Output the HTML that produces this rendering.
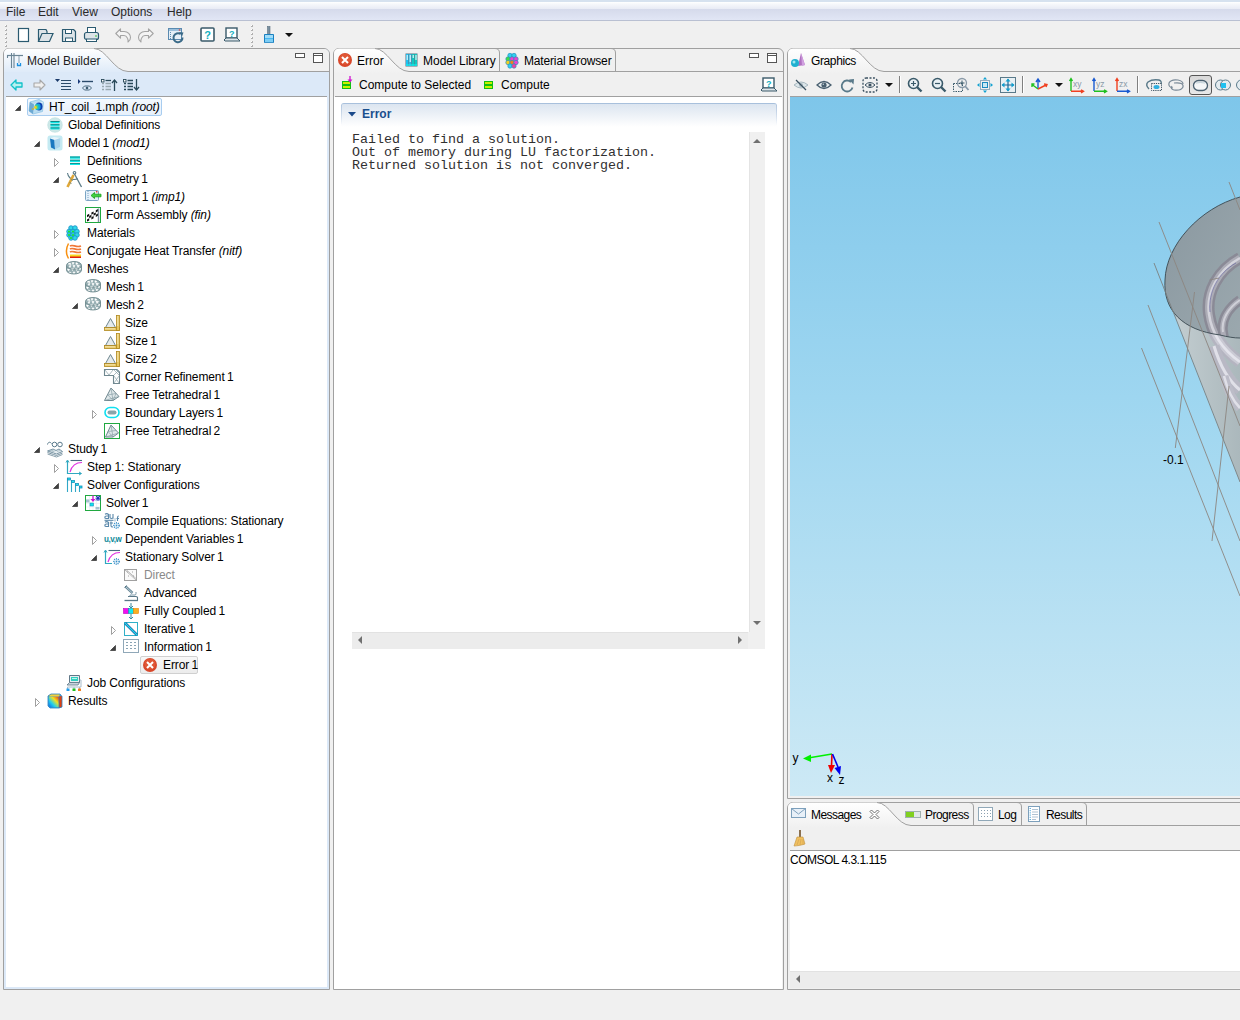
<!DOCTYPE html><html><head><meta charset="utf-8"><style>
*{margin:0;padding:0;box-sizing:border-box}
html,body{width:1240px;height:1020px;overflow:hidden;background:#f0f0f0;font-family:"Liberation Sans",sans-serif;font-size:12px;color:#000}
.a{position:absolute}
.t{position:absolute;white-space:nowrap;line-height:18px;height:18px}
svg{position:absolute;overflow:visible}
i{font-style:italic}
.mono{position:absolute;font-family:"Liberation Mono",monospace;font-size:13.33px;line-height:13px;white-space:pre;color:#303030}
</style></head><body>
<div class="a" style="left:0;top:0;width:1240px;height:21px;background:linear-gradient(#d6e2ef 0,#d6e2ef 2px,#fff 2px,#f6f8fb 4px,#e8ebf5 9px,#d5daeb 9px,#e1e6f5 20px,#b9c0d2 20px,#b9c0d2 21px)"></div>
<div class="t" style="left:6px;top:3px;color:#2a2a2a">File</div>
<div class="t" style="left:38px;top:3px;color:#2a2a2a">Edit</div>
<div class="t" style="left:72px;top:3px;color:#2a2a2a">View</div>
<div class="t" style="left:111px;top:3px;color:#2a2a2a">Options</div>
<div class="t" style="left:167px;top:3px;color:#2a2a2a">Help</div>
<div class="a" style="left:5px;top:25px;width:2px;height:2px;background:linear-gradient(135deg,#fff 0,#fff 40%,#b0b0b0 40%)"></div><div class="a" style="left:5px;top:29px;width:2px;height:2px;background:linear-gradient(135deg,#fff 0,#fff 40%,#b0b0b0 40%)"></div><div class="a" style="left:5px;top:33px;width:2px;height:2px;background:linear-gradient(135deg,#fff 0,#fff 40%,#b0b0b0 40%)"></div><div class="a" style="left:5px;top:37px;width:2px;height:2px;background:linear-gradient(135deg,#fff 0,#fff 40%,#b0b0b0 40%)"></div><div class="a" style="left:5px;top:41px;width:2px;height:2px;background:linear-gradient(135deg,#fff 0,#fff 40%,#b0b0b0 40%)"></div><div class="a" style="left:5px;top:45px;width:2px;height:2px;background:linear-gradient(135deg,#fff 0,#fff 40%,#b0b0b0 40%)"></div>
<div class="a" style="left:251px;top:25px;width:2px;height:2px;background:linear-gradient(135deg,#fff 0,#fff 40%,#b0b0b0 40%)"></div><div class="a" style="left:251px;top:29px;width:2px;height:2px;background:linear-gradient(135deg,#fff 0,#fff 40%,#b0b0b0 40%)"></div><div class="a" style="left:251px;top:33px;width:2px;height:2px;background:linear-gradient(135deg,#fff 0,#fff 40%,#b0b0b0 40%)"></div><div class="a" style="left:251px;top:37px;width:2px;height:2px;background:linear-gradient(135deg,#fff 0,#fff 40%,#b0b0b0 40%)"></div><div class="a" style="left:251px;top:41px;width:2px;height:2px;background:linear-gradient(135deg,#fff 0,#fff 40%,#b0b0b0 40%)"></div><div class="a" style="left:251px;top:45px;width:2px;height:2px;background:linear-gradient(135deg,#fff 0,#fff 40%,#b0b0b0 40%)"></div>
<svg style="left:17px;top:27px" width="14" height="16" viewBox="0 0 14 16"><rect x="1.5" y="1.5" width="10" height="13" fill="#fff" stroke="#2a5a70" stroke-width="1.2"/></svg><svg style="left:37px;top:27px" width="18" height="16" viewBox="0 0 18 16"><path d="M1.5 14.5 L1.5 2.5 L9 2.5 L10 4.5 L10 6.5" fill="#dde4e8" stroke="#2a5a70" stroke-width="1.2"/><path d="M1.5 14.5 L5 6.5 L16 6.5 L12.5 14.5 Z" fill="#dde4e8" stroke="#2a5a70" stroke-width="1.2"/></svg><svg style="left:61px;top:27px" width="16" height="16" viewBox="0 0 16 16"><path d="M1.5 2.5 L12.5 2.5 L14.5 4.5 L14.5 14.5 L1.5 14.5 Z" fill="#dde4e8" stroke="#2a5a70" stroke-width="1.2" stroke-linejoin="round"/><rect x="4.5" y="2.5" width="6" height="4" fill="#fff" stroke="#2a5a70"/><rect x="4.5" y="11" width="7" height="3.5" fill="#fff" stroke="#2a5a70"/></svg><svg style="left:83px;top:26px" width="17" height="17" viewBox="0 0 17 17"><rect x="4.5" y="1.5" width="8" height="5" fill="#fff" stroke="#2a5a70"/><rect x="1.5" y="6.5" width="14" height="7" rx="2" fill="#dde4e8" stroke="#2a5a70" stroke-width="1.2"/><rect x="3.5" y="13" width="10" height="2.5" fill="#fff" stroke="#2a5a70"/><circle cx="13" cy="10" r="0.8" fill="#20c020"/></svg><svg style="left:115px;top:28px" width="16" height="15" viewBox="0 0 16 15"><path d="M0.8 5.5 L5.5 0.8 L5.5 3.5 L9 3.5 C13 3.5 15.5 6.5 15.5 9.5 C15.5 11.5 14.5 13 13 14 C13.3 12.5 13.2 11.5 12.5 10.2 C11.8 8.8 10.5 7.5 9 7.5 L5.5 7.5 L5.5 10.2 Z" fill="#f4f4f4" stroke="#a4a4a4" stroke-width="1.1" stroke-linejoin="round"/></svg><svg style="left:138px;top:28px" width="16" height="15" viewBox="0 0 16 15"><g transform="translate(16,0) scale(-1,1)"><path d="M0.8 5.5 L5.5 0.8 L5.5 3.5 L9 3.5 C13 3.5 15.5 6.5 15.5 9.5 C15.5 11.5 14.5 13 13 14 C13.3 12.5 13.2 11.5 12.5 10.2 C11.8 8.8 10.5 7.5 9 7.5 L5.5 7.5 L5.5 10.2 Z" fill="#f4f4f4" stroke="#a4a4a4" stroke-width="1.1" stroke-linejoin="round"/></g></svg><svg style="left:168px;top:28px" width="17" height="15" viewBox="0 0 17 15"><rect x="0.5" y="0.5" width="13" height="11" fill="#e4eef6" stroke="#5a8ab0"/><rect x="1" y="1" width="12" height="2" fill="#9ac0dc"/><circle cx="11.5" cy="2" r="0.8" fill="#e04040"/><line x1="2.5" y1="4" x2="2.5" y2="11" stroke="#5a8ab0" stroke-dasharray="1,1"/><path d="M14.5 9.5 A4.5 4.5 0 1 1 12.5 6" fill="none" stroke="#3a6a88" stroke-width="2"/><path d="M11 4 L15.5 4.5 L14 8.5 Z" fill="#3a6a88"/></svg><svg style="left:200px;top:27px" width="15" height="15" viewBox="0 0 15 15"><rect x="1" y="1" width="13" height="13" rx="1" fill="#fff" stroke="#3a5a6a" stroke-width="1.6"/><text x="4.2" y="11.5" font-size="11" font-weight="bold" fill="#10b0c0" font-family="Liberation Sans">?</text></svg><svg style="left:224px;top:27px" width="16" height="15" viewBox="0 0 16 15"><rect x="2" y="1" width="11" height="10" fill="#fff" stroke="#3a5a6a" stroke-width="1.4"/><path d="M0 13 L2 11 L13 11 L16 14 L1 14 Z" fill="#dde4e8" stroke="#3a5a6a"/><text x="5" y="9.5" font-size="9" font-weight="bold" fill="#10b0c0" font-family="Liberation Sans">?</text></svg><svg style="left:263px;top:26px" width="12" height="17" viewBox="0 0 12 17"><rect x="4.5" y="0.5" width="2.5" height="8" fill="#7a90a0" stroke="#5a7080" stroke-width="0.6"/><path d="M1.5 8.5 L10.5 8.5 L10.5 16.5 L1.5 16.5 Z" fill="#48b8f0" stroke="#1a80c0"/><rect x="2" y="9" width="8" height="3" fill="#a0dcf8"/><path d="M3 13v3.5M5 13v3.5M7 13v3.5M9 13v3.5" stroke="#e0f4ff" stroke-width="0.7"/></svg><svg style="left:285px;top:33px" width="8" height="4" viewBox="0 0 8 4"><path d="M0 0 L8 0 L4 4 Z" fill="#111"/></svg>
<div class="a" style="left:3px;top:48px;width:327px;height:942px;border:1px solid #a0a0a0;border-radius:6px 6px 0 0;background:#dce9f8"></div>
<div class="a" style="left:4px;top:49px;width:325px;height:22px;background:#f0f0f0;border-radius:5px 5px 0 0"></div>
<svg style="left:0;top:44px" width="340" height="32"><defs><linearGradient id="gmb" x1="0" y1="0" x2="0" y2="1"><stop offset="0" stop-color="#ffffff"/><stop offset="1" stop-color="#dce9f8"/></linearGradient></defs><path d="M4 28 L4 10 Q4 5 9 4.5 L94 4.5 C106 4.5 114 27.5 128 27.5 L329 27.5 L329 30 L4 30 Z" fill="url(#gmb)"/><path d="M94 4.5 C106 4.5 114 27.5 128 27.5 L329 27.5" fill="none" stroke="#a0a0a0" stroke-width="1"/></svg>
<div class="a" style="left:4px;top:72px;width:325px;height:24px;background:#dce9f8"></div>
<div class="a" style="left:6px;top:96px;width:321px;height:1px;background:#a0a0a0"></div>
<div class="a" style="left:6px;top:97px;width:321px;height:890px;background:#fff"></div>
<div class="a" style="left:295px;top:53px;width:10px;height:5px;border:1px solid #555;background:#fff"></div>
<div class="a" style="left:313px;top:53px;width:10px;height:10px;border:1px solid #555;background:linear-gradient(#fff 0,#fff 1px,#555 1px,#555 2px,#fff 2px)"></div>
<svg style="left:7px;top:52px" width="16" height="16" viewBox="0 0 16 16"><path d="M4.5 1 L4.5 16 M7 1 L7 16" stroke="#6a8494" stroke-width="1.1"/><path d="M0 3.5 L16 3.5" stroke="#6a8494" stroke-width="1.2"/><path d="M0.5 3 L0.5 6" stroke="#6a8494" stroke-width="1.1"/><line x1="12" y1="4" x2="12" y2="11" stroke="#8aa0b0"/><path d="M10.5 11 L10.5 13.5 L13.5 13.5 L13.5 11" stroke="#1a90e0" stroke-width="1.3" fill="none"/></svg>
<div class="t" style="left:27px;top:52px;color:#1e1e1e">Model Builder</div>
<svg style="left:10px;top:79px" width="13" height="12" viewBox="0 0 13 12"><path d="M1 6 L6 1 L6 4 L12 4 L12 8 L6 8 L6 11 Z" fill="#b8f0f0" stroke="#10c0c8" stroke-width="1.3" stroke-linejoin="round"/></svg>
<svg style="left:33px;top:79px" width="13" height="12" viewBox="0 0 13 12"><path d="M12 6 L7 1 L7 4 L1 4 L1 8 L7 8 L7 11 Z" fill="#f0f0f0" stroke="#a8a8a8" stroke-width="1.1" stroke-linejoin="round"/></svg>
<svg style="left:55px;top:79px" width="16" height="12" viewBox="0 0 16 12"><path d="M0 0 L5 0 L2.5 3 Z" fill="#1a3a6a"/><path d="M6 1.5 L16 1.5 M6 4.5 L16 4.5 M6 7.5 L16 7.5 M6 10.5 L16 10.5" stroke="#2a4a6a" stroke-width="1.2"/></svg>
<svg style="left:78px;top:79px" width="16" height="12" viewBox="0 0 16 12"><path d="M0 0 L0 5 L2.5 2.5 Z" fill="#1a3a7a"/><path d="M4 2.5 L15 2.5" stroke="#2a4a6a" stroke-width="1.4"/><path d="M4.5 9 L6.5 7 L11.5 7 L13.5 9 L11.5 11 L6.5 11 Z" fill="none" stroke="#3a5a70" stroke-width="0.9"/><circle cx="9" cy="9" r="1.3" fill="#3a5a70"/></svg>
<svg style="left:101px;top:79px" width="16" height="12" viewBox="0 0 16 12"><rect x="0.5" y="0.5" width="2.5" height="2.5" fill="#fff" stroke="#2a4a5a" stroke-width="0.9"/><path d="M4.5 1.5 H10" stroke="#2a4a5a" stroke-width="1.3"/><path d="M1 4.5h2M1 7.5h2M1 10.5h2M4.5 4.5 H10 M4.5 7.5 H10 M4.5 10.5 H10" stroke="#98a8b0" stroke-width="1.3"/><path d="M13.5 12 L13.5 1.5" stroke="#2a4a5a" stroke-width="1.3"/><path d="M11 4 L13.5 1 L16 4" stroke="#2a4a5a" stroke-width="1.3" fill="none"/></svg>
<svg style="left:123px;top:79px" width="16" height="12" viewBox="0 0 16 12"><rect x="0.5" y="0.5" width="2.5" height="2.5" fill="#fff" stroke="#2a4a5a" stroke-width="0.9"/><path d="M1 4.5h2M1 7.5h2M1 10.5h2M4.5 1.5 H10 M4.5 4.5 H10 M4.5 7.5 H10 M4.5 10.5 H10" stroke="#2a4a5a" stroke-width="1.3"/><path d="M13.5 0 L13.5 10.5" stroke="#2a4a5a" stroke-width="1.3"/><path d="M11 8 L13.5 11 L16 8" stroke="#2a4a5a" stroke-width="1.3" fill="none"/></svg>
<svg style="left:15px;top:105px" width="6" height="6" viewBox="0 0 6 6"><path d="M5.5 0.5 L5.5 5.5 L0.5 5.5 Z" fill="#404040" stroke="#404040" stroke-width="0.8"/></svg>
<div class="a" style="left:27px;top:98px;width:135px;height:18px;border:1px solid #a8cdf0;border-radius:2px;background:linear-gradient(#f4f9fe,#e6f0fb)"></div>
<svg style="left:28px;top:99px" width="16" height="16" viewBox="0 0 16 16"><path d="M2 3 L11 0.5 L15.5 3 L14.5 12.5 L5 15 L1 12 Z" fill="#b8dcf0" stroke="#90c4e4" stroke-width="0.8"/><path d="M2 3 L6 5.5 L5 15 L1 12 Z" fill="#5a9ccc" opacity="0.8"/><path d="M6 5.5 L15.5 3" stroke="#e0f0fa" stroke-width="0.8"/><ellipse cx="11" cy="7.5" rx="3.5" ry="4" fill="#1040b0"/><ellipse cx="9.8" cy="7.8" rx="2.8" ry="3.3" fill="#10a8e0"/><ellipse cx="8.5" cy="8" rx="2" ry="2.5" fill="#40d090"/><ellipse cx="7.5" cy="8.3" rx="1.3" ry="1.6" fill="#f0d020"/><circle cx="5" cy="10" r="1" fill="#c0b040"/></svg>
<div class="t" style="left:49px;top:98px;color:#000;letter-spacing:-0.1px">HT_coil_1.mph <i>(root)</i></div>
<svg style="left:47px;top:117px" width="16" height="16" viewBox="0 0 16 16"><circle cx="8" cy="8" r="7.3" fill="#cde8e8" stroke="#b8dede" stroke-width="0.6"/><path d="M3.5 4h9v2.2h-9zM3.5 7.2h9v2.2h-9zM3.5 10.4h9v2.2h-9z" fill="#10e8e8"/><path d="M3.5 4.5h9M3.5 7.7h9M3.5 10.9h9" stroke="#108a8a" stroke-width="1"/></svg>
<div class="t" style="left:68px;top:116px;color:#000;letter-spacing:-0.1px">Global Definitions</div>
<svg style="left:34px;top:141px" width="6" height="6" viewBox="0 0 6 6"><path d="M5.5 0.5 L5.5 5.5 L0.5 5.5 Z" fill="#404040" stroke="#404040" stroke-width="0.8"/></svg>
<svg style="left:47px;top:135px" width="16" height="16" viewBox="0 0 16 16"><rect x="0.5" y="0.5" width="15" height="15" rx="2.5" fill="#c4eaf2"/><path d="M3 3.5 L7 2 L13.5 3 L13 12 L8 14.5 L4 12.5 Z" fill="#e8f4fa"/><path d="M3 3.5 L7.5 5 L8 14.5 L4 12.5 Z" fill="#1a78c0"/><path d="M7.5 5 L13.5 3 L13 12 L8 14.5 Z" fill="#a8d4ec"/></svg>
<div class="t" style="left:68px;top:134px;color:#000;letter-spacing:-0.1px">Model<span style="letter-spacing:-1px"> </span>1 <i>(mod1)</i></div>
<svg style="left:54px;top:158px" width="6" height="9" viewBox="0 0 6 9"><path d="M0.5 0.5 L4.5 4.5 L0.5 8.5 Z" fill="#fff" stroke="#a0a0a0" stroke-width="1" stroke-linejoin="round"/></svg>
<svg style="left:66px;top:153px" width="16" height="16" viewBox="0 0 16 16"><path d="M4 3.5h10v2.2h-10zM4 6.7h10v2.2h-10zM4 9.9h10v2.2h-10z" fill="#10e8e8"/><path d="M4 4h10M4 7.2h10M4 10.4h10" stroke="#108a8a" stroke-width="1"/></svg>
<div class="t" style="left:87px;top:152px;color:#000;letter-spacing:-0.1px">Definitions</div>
<svg style="left:53px;top:177px" width="6" height="6" viewBox="0 0 6 6"><path d="M5.5 0.5 L5.5 5.5 L0.5 5.5 Z" fill="#404040" stroke="#404040" stroke-width="0.8"/></svg>
<svg style="left:66px;top:171px" width="16" height="16" viewBox="0 0 16 16"><path d="M1.5 2 C2 6 5 8.5 8 8.5 C10 8.5 11 8 11.5 7.5" stroke="#5a7a86" stroke-width="1.1" fill="none"/><path d="M8.5 3 L15.5 16" stroke="#5a7a86" stroke-width="1.3" fill="none"/><circle cx="8.5" cy="1.8" r="1.3" fill="none" stroke="#5a7a86" stroke-width="1.1"/><path d="M7.5 4 L1.5 16" stroke="#e0a838" stroke-width="2.6"/><path d="M5 8.5 L7 9.5 M3.5 11.5 L5.5 12.5" stroke="#5a7a86" stroke-width="0.8"/></svg>
<div class="t" style="left:87px;top:170px;color:#000;letter-spacing:-0.1px">Geometry<span style="letter-spacing:-1px"> </span>1</div>
<svg style="left:85px;top:189px" width="16" height="16" viewBox="0 0 16 16"><rect x="0.5" y="1.5" width="13" height="10" rx="1" fill="#e4f0fa" stroke="#7aa4c4"/><line x1="3" y1="2" x2="3" y2="11" stroke="#7aa4c4" stroke-dasharray="1,1"/><rect x="11" y="2" width="1.5" height="1.5" fill="#e04040"/><path d="M6 6.5 L9.5 3.5 L9.5 5.2 L16 5.2 L16 7.8 L9.5 7.8 L9.5 9.5 Z" fill="#40d040" stroke="#18a018" stroke-width="0.8" stroke-linejoin="round"/></svg>
<div class="t" style="left:106px;top:188px;color:#000;letter-spacing:-0.1px">Import<span style="letter-spacing:-1px"> </span>1 <i>(imp1)</i></div>
<svg style="left:85px;top:207px" width="16" height="16" viewBox="0 0 16 16"><rect x="0.5" y="0.5" width="15" height="15" fill="#fff" stroke="#20a840"/><path d="M2 8 L13 2 L13 10 L2 14 Z" fill="#fff"/><path d="M2 8l2.2-1.2v2.2l-2.2 1.2zM6.4 5.6l2.2-1.2v2.2l-2.2 1.2zM10.8 3.2l2.2-1.2v2.2l-2.2 1.2zM4.2 9l2.2-1.2v2.2l-2.2 1.2zM8.6 6.6l2.2-1.2v2.2l-2.2 1.2zM2 12.4l2.2-1.2v2.2l-2.2 1.2zM6.4 10.2l2.2-1.2v2.2l-2.2 1.2zM10.8 7.8l2.2-1.2v2.2l-2.2 1.2z" fill="#111"/><line x1="13.5" y1="1.5" x2="13.5" y2="15" stroke="#8090a0" stroke-width="1.4"/></svg>
<div class="t" style="left:106px;top:206px;color:#000;letter-spacing:-0.1px">Form Assembly <i>(fin)</i></div>
<svg style="left:54px;top:230px" width="6" height="9" viewBox="0 0 6 9"><path d="M0.5 0.5 L4.5 4.5 L0.5 8.5 Z" fill="#fff" stroke="#a0a0a0" stroke-width="1" stroke-linejoin="round"/></svg>
<svg style="left:66px;top:225px" width="16" height="16" viewBox="0 0 16 16"><g stroke="#1890c8" stroke-width="0.8"><circle cx="5" cy="3" r="2.3" fill="#30d8e8"/><circle cx="9" cy="3" r="2.3" fill="#30d8e8"/><circle cx="3" cy="6.5" r="2.3" fill="#30d8e8"/><circle cx="7" cy="6.5" r="2.3" fill="#30d8e8"/><circle cx="11" cy="6.5" r="2.3" fill="#30d8e8"/><circle cx="3" cy="10" r="2.3" fill="#30d8e8"/><circle cx="7" cy="10" r="2.3" fill="#30d8e8"/><circle cx="11" cy="10" r="2.3" fill="#30d8e8"/><circle cx="5" cy="13" r="2.3" fill="#30d8e8"/><circle cx="9" cy="13" r="2.3" fill="#30d8e8"/></g><g fill="#20e020"><circle cx="3" cy="6.5" r="1"/><circle cx="7" cy="6.5" r="1"/><circle cx="3" cy="10" r="1"/><circle cx="7" cy="10" r="1"/><circle cx="5" cy="13" r="1"/></g></svg>
<div class="t" style="left:87px;top:224px;color:#000;letter-spacing:-0.1px">Materials</div>
<svg style="left:54px;top:248px" width="6" height="9" viewBox="0 0 6 9"><path d="M0.5 0.5 L4.5 4.5 L0.5 8.5 Z" fill="#fff" stroke="#a0a0a0" stroke-width="1" stroke-linejoin="round"/></svg>
<svg style="left:66px;top:243px" width="16" height="16" viewBox="0 0 16 16"><path d="M4 3 C7 1 10 5 15 3 M4 6 C7 4 10 8 15 6 M4 9 C7 7 10 11 15 9" stroke="#f07838" stroke-width="1.7" fill="none"/><rect x="4" y="11.5" width="11" height="2.5" fill="#f8d820"/><rect x="4" y="13.5" width="11" height="1.5" fill="#e02010"/><path d="M2.5 0.5 C0 5 0 11 2.5 15.5" stroke="#f89010" stroke-width="1.5" fill="none"/></svg>
<div class="t" style="left:87px;top:242px;color:#000;letter-spacing:-0.1px">Conjugate Heat Transfer <i>(nitf)</i></div>
<svg style="left:53px;top:267px" width="6" height="6" viewBox="0 0 6 6"><path d="M5.5 0.5 L5.5 5.5 L0.5 5.5 Z" fill="#404040" stroke="#404040" stroke-width="0.8"/></svg>
<svg style="left:66px;top:261px" width="16" height="16" viewBox="0 0 16 16"><path d="M0.5 4.5 C0.5 -0.8 15.5 -0.8 15.5 4.5 L15.5 9 C15.5 14.3 0.5 14.3 0.5 9 Z" fill="#98b0b4"/><path d="M2 3l2-1.5 1 2zM6 1.5l2 0 -1 2zM10 1.5l2 1 -2 1zM3 5l2-0.5 -1 2zM7 4.5l2 0 -1 2zM11 4l2.5 0.5 -1.5 2zM1.5 8l2 0 -1 2zM5.5 7.5l2 0 -1 2zM9.5 7.5l2 0 -1 2zM13 7l1.5 0 -0.5 2zM3 11l2 0.5 -1 1.5zM7 11l2 0 -1 2zM11 10.5l2 0 -1 2z" fill="#fff" stroke="#fff" stroke-width="0.6" stroke-linejoin="round"/><path d="M0.5 4.5 C0.5 9.5 15.5 9.5 15.5 4.5" fill="none" stroke="#6e8a8e" stroke-width="0.8"/><path d="M0.5 4.5 C0.5 -0.8 15.5 -0.8 15.5 4.5 L15.5 9 C15.5 14.3 0.5 14.3 0.5 9 Z" fill="none" stroke="#6e8a8e" stroke-width="0.9"/></svg>
<div class="t" style="left:87px;top:260px;color:#000;letter-spacing:-0.1px">Meshes</div>
<svg style="left:85px;top:279px" width="16" height="16" viewBox="0 0 16 16"><path d="M0.5 4.5 C0.5 -0.8 15.5 -0.8 15.5 4.5 L15.5 9 C15.5 14.3 0.5 14.3 0.5 9 Z" fill="#98b0b4"/><path d="M2 3l2-1.5 1 2zM6 1.5l2 0 -1 2zM10 1.5l2 1 -2 1zM3 5l2-0.5 -1 2zM7 4.5l2 0 -1 2zM11 4l2.5 0.5 -1.5 2zM1.5 8l2 0 -1 2zM5.5 7.5l2 0 -1 2zM9.5 7.5l2 0 -1 2zM13 7l1.5 0 -0.5 2zM3 11l2 0.5 -1 1.5zM7 11l2 0 -1 2zM11 10.5l2 0 -1 2z" fill="#fff" stroke="#fff" stroke-width="0.6" stroke-linejoin="round"/><path d="M0.5 4.5 C0.5 9.5 15.5 9.5 15.5 4.5" fill="none" stroke="#6e8a8e" stroke-width="0.8"/><path d="M0.5 4.5 C0.5 -0.8 15.5 -0.8 15.5 4.5 L15.5 9 C15.5 14.3 0.5 14.3 0.5 9 Z" fill="none" stroke="#6e8a8e" stroke-width="0.9"/></svg>
<div class="t" style="left:106px;top:278px;color:#000;letter-spacing:-0.1px">Mesh<span style="letter-spacing:-1px"> </span>1</div>
<svg style="left:72px;top:303px" width="6" height="6" viewBox="0 0 6 6"><path d="M5.5 0.5 L5.5 5.5 L0.5 5.5 Z" fill="#404040" stroke="#404040" stroke-width="0.8"/></svg>
<svg style="left:85px;top:297px" width="16" height="16" viewBox="0 0 16 16"><path d="M0.5 4.5 C0.5 -0.8 15.5 -0.8 15.5 4.5 L15.5 9 C15.5 14.3 0.5 14.3 0.5 9 Z" fill="#98b0b4"/><path d="M2 3l2-1.5 1 2zM6 1.5l2 0 -1 2zM10 1.5l2 1 -2 1zM3 5l2-0.5 -1 2zM7 4.5l2 0 -1 2zM11 4l2.5 0.5 -1.5 2zM1.5 8l2 0 -1 2zM5.5 7.5l2 0 -1 2zM9.5 7.5l2 0 -1 2zM13 7l1.5 0 -0.5 2zM3 11l2 0.5 -1 1.5zM7 11l2 0 -1 2zM11 10.5l2 0 -1 2z" fill="#fff" stroke="#fff" stroke-width="0.6" stroke-linejoin="round"/><path d="M0.5 4.5 C0.5 9.5 15.5 9.5 15.5 4.5" fill="none" stroke="#6e8a8e" stroke-width="0.8"/><path d="M0.5 4.5 C0.5 -0.8 15.5 -0.8 15.5 4.5 L15.5 9 C15.5 14.3 0.5 14.3 0.5 9 Z" fill="none" stroke="#6e8a8e" stroke-width="0.9"/></svg>
<div class="t" style="left:106px;top:296px;color:#000;letter-spacing:-0.1px">Mesh<span style="letter-spacing:-1px"> </span>2</div>
<svg style="left:104px;top:315px" width="16" height="16" viewBox="0 0 16 16"><path d="M1.5 12.5 L6.5 3.5 L11.5 12.5 Z" fill="#e4eaec" stroke="#708890"/><rect x="0.5" y="12.5" width="15" height="3" fill="#e8c860" stroke="#b08820" stroke-width="0.8"/><rect x="12.5" y="0.5" width="3" height="15" fill="#e8c860" stroke="#b08820" stroke-width="0.8"/><path d="M2 13v1.5M4 13v1.5M6 13v1.5M8 13v1.5M10 13v1.5M13 2h1.5M13 4h1.5M13 6h1.5M13 8h1.5M13 10h1.5" stroke="#fff" stroke-width="0.7"/></svg>
<div class="t" style="left:125px;top:314px;color:#000;letter-spacing:-0.1px">Size</div>
<svg style="left:104px;top:333px" width="16" height="16" viewBox="0 0 16 16"><path d="M1.5 12.5 L6.5 3.5 L11.5 12.5 Z" fill="#e4eaec" stroke="#708890"/><rect x="0.5" y="12.5" width="15" height="3" fill="#e8c860" stroke="#b08820" stroke-width="0.8"/><rect x="12.5" y="0.5" width="3" height="15" fill="#e8c860" stroke="#b08820" stroke-width="0.8"/><path d="M2 13v1.5M4 13v1.5M6 13v1.5M8 13v1.5M10 13v1.5M13 2h1.5M13 4h1.5M13 6h1.5M13 8h1.5M13 10h1.5" stroke="#fff" stroke-width="0.7"/></svg>
<div class="t" style="left:125px;top:332px;color:#000;letter-spacing:-0.1px">Size<span style="letter-spacing:-1px"> </span>1</div>
<svg style="left:104px;top:351px" width="16" height="16" viewBox="0 0 16 16"><path d="M1.5 12.5 L6.5 3.5 L11.5 12.5 Z" fill="#e4eaec" stroke="#708890"/><rect x="0.5" y="12.5" width="15" height="3" fill="#e8c860" stroke="#b08820" stroke-width="0.8"/><rect x="12.5" y="0.5" width="3" height="15" fill="#e8c860" stroke="#b08820" stroke-width="0.8"/><path d="M2 13v1.5M4 13v1.5M6 13v1.5M8 13v1.5M10 13v1.5M13 2h1.5M13 4h1.5M13 6h1.5M13 8h1.5M13 10h1.5" stroke="#fff" stroke-width="0.7"/></svg>
<div class="t" style="left:125px;top:350px;color:#000;letter-spacing:-0.1px">Size<span style="letter-spacing:-1px"> </span>2</div>
<svg style="left:104px;top:369px" width="16" height="16" viewBox="0 0 16 16"><path d="M0.5 0.5 L13 0.5 L15.5 3 L15.5 14.5 L9.5 14.5 L9.5 6.5 L0.5 6.5 Z" fill="#fff" stroke="#708890" stroke-width="1.1"/><path d="M1 1 L5 6 L9 1 M10 1 L15 6 M10 6 L15 1 M12 1 L15 4" stroke="#8aa0a8" stroke-width="0.7" fill="none"/><path d="M10 7 L15 14 M15 7 L10 14" stroke="#8aa0a8" stroke-width="0.7"/></svg>
<div class="t" style="left:125px;top:368px;color:#000;letter-spacing:-0.1px">Corner Refinement<span style="letter-spacing:-1px"> </span>1</div>
<svg style="left:104px;top:387px" width="16" height="16" viewBox="0 0 16 16"><path d="M7 1 L15 9.5 L9 13.5 L0.5 13.5 Z" fill="#e0e8ea" stroke="#708890"/><path d="M7 1 L9 13.5 M0.5 13.5 L15 9.5 M3.5 8 L12 6.5 M4 8 L9 13.5 M12 6.5 L9 13.5" stroke="#8aa0a8" stroke-width="0.7" fill="none"/></svg>
<div class="t" style="left:125px;top:386px;color:#000;letter-spacing:-0.1px">Free Tetrahedral<span style="letter-spacing:-1px"> </span>1</div>
<svg style="left:92px;top:410px" width="6" height="9" viewBox="0 0 6 9"><path d="M0.5 0.5 L4.5 4.5 L0.5 8.5 Z" fill="#fff" stroke="#a0a0a0" stroke-width="1" stroke-linejoin="round"/></svg>
<svg style="left:104px;top:405px" width="16" height="16" viewBox="0 0 16 16"><rect x="1" y="2.5" width="14" height="10" rx="5" fill="#fff" stroke="#10e0f0" stroke-width="1.6"/><rect x="3.5" y="5.5" width="9" height="4" rx="2" fill="#8aa4aa"/></svg>
<div class="t" style="left:125px;top:404px;color:#000;letter-spacing:-0.1px">Boundary Layers<span style="letter-spacing:-1px"> </span>1</div>
<svg style="left:104px;top:423px" width="16" height="16" viewBox="0 0 16 16"><rect x="0.5" y="0.5" width="15" height="15" fill="#fff" stroke="#20a840"/><path d="M7 2 L14.5 10 L9 14 L1.5 14 Z" fill="#e0e8ea" stroke="#708890"/><path d="M7 2 L9 14 M1.5 14 L14.5 10 M4 8.5 L12 7.5 M4 8.5 L9 14" stroke="#8aa0a8" stroke-width="0.7" fill="none"/></svg>
<div class="t" style="left:125px;top:422px;color:#000;letter-spacing:-0.1px">Free Tetrahedral<span style="letter-spacing:-1px"> </span>2</div>
<svg style="left:34px;top:447px" width="6" height="6" viewBox="0 0 6 6"><path d="M5.5 0.5 L5.5 5.5 L0.5 5.5 Z" fill="#404040" stroke="#404040" stroke-width="0.8"/></svg>
<svg style="left:47px;top:441px" width="16" height="16" viewBox="0 0 16 16"><g fill="none" stroke="#5a7a8c" stroke-width="1"><path d="M0.5 3.5 C1 1 3 0.5 4.5 2.5"/><circle cx="7.5" cy="3.5" r="2.3"/><circle cx="13" cy="3.5" r="2.3"/></g><path d="M0.5 10 L6 8 L9 9.5 L12 8 L15.5 10.5 L9.5 13 L6.5 12 Z" fill="#e4ecf0" stroke="#6a8898" stroke-width="0.9" stroke-linejoin="round"/><path d="M3 10 L6.5 9.2 M4.5 11 L7.5 10.2 M10 10.5 L13 9.5" stroke="#8aa4b0" stroke-width="0.6"/><path d="M0.5 11.5 L6.5 13.5 L9.5 14.5 L15.5 12" fill="none" stroke="#6a8898" stroke-width="0.9"/><path d="M0.5 13 L6.5 15 L9.5 16 L15.5 13.5" fill="none" stroke="#6a8898" stroke-width="0.8"/></svg>
<div class="t" style="left:68px;top:440px;color:#000;letter-spacing:-0.1px">Study<span style="letter-spacing:-1px"> </span>1</div>
<svg style="left:54px;top:464px" width="6" height="9" viewBox="0 0 6 9"><path d="M0.5 0.5 L4.5 4.5 L0.5 8.5 Z" fill="#fff" stroke="#a0a0a0" stroke-width="1" stroke-linejoin="round"/></svg>
<svg style="left:66px;top:459px" width="16" height="16" viewBox="0 0 16 16"><path d="M1.5 2 L1.5 14.5 L15 14.5" stroke="#30a8c0" stroke-width="1.2" fill="none"/><path d="M0 3.5 L1.5 1 L3 3.5 M13 13 L15.5 14.5 L13 16" stroke="#30a8c0" fill="none"/><line x1="4.5" y1="1.5" x2="16" y2="1.5" stroke="#4a6a80" stroke-width="1.1"/><path d="M4 13 C6 6 10 3.5 16 3.5" stroke="#e030e0" stroke-width="1.2" fill="none"/></svg>
<div class="t" style="left:87px;top:458px;color:#000;letter-spacing:-0.1px">Step 1: Stationary</div>
<svg style="left:53px;top:483px" width="6" height="6" viewBox="0 0 6 6"><path d="M5.5 0.5 L5.5 5.5 L0.5 5.5 Z" fill="#404040" stroke="#404040" stroke-width="0.8"/></svg>
<svg style="left:66px;top:477px" width="16" height="16" viewBox="0 0 16 16"><g stroke="#30a8c8" stroke-width="1.1" fill="none"><path d="M1.5 1 V15 M5.5 3.5 V15 M9.5 6.5 V15 M13.5 9 V15"/></g><g fill="#20e0f0" stroke="#1890b8" stroke-width="0.8"><rect x="1.5" y="1" width="3" height="2"/><rect x="5.5" y="3.5" width="3" height="2"/><rect x="9.5" y="6.5" width="3" height="2"/><rect x="13.5" y="9" width="2.5" height="2"/></g></svg>
<div class="t" style="left:87px;top:476px;color:#000;letter-spacing:-0.1px">Solver Configurations</div>
<svg style="left:72px;top:501px" width="6" height="6" viewBox="0 0 6 6"><path d="M5.5 0.5 L5.5 5.5 L0.5 5.5 Z" fill="#404040" stroke="#404040" stroke-width="0.8"/></svg>
<svg style="left:85px;top:495px" width="16" height="16" viewBox="0 0 16 16"><rect x="0.5" y="0.5" width="15" height="15" fill="#fff" stroke="#20a840"/><path d="M1 4.5 H15 M1 8.5 H15 M1 12 H15 M4.5 1 V15 M8 1 V15 M11.5 1 V15" stroke="#e4eef4" stroke-width="0.6"/><rect x="1" y="4.5" width="3.5" height="3" fill="#a8c0d0"/><rect x="5" y="8" width="3.5" height="3" fill="#10e0f0" stroke="#1890b8" stroke-width="0.6"/><rect x="10.5" y="12" width="4" height="2.5" fill="#a8c0d0"/><path d="M8 0.5 V6" stroke="#d010d0" stroke-width="1.3"/><path d="M5.5 4 L10.5 4 L8 7 Z" fill="#d010d0"/><path d="M13 0.5 V6 M10.5 3.2 H15.5 M11 1 L15 5.5 M15 1 L11 5.5" stroke="#1a2ab0" stroke-width="1"/></svg>
<div class="t" style="left:106px;top:494px;color:#000;letter-spacing:-0.1px">Solver<span style="letter-spacing:-1px"> </span>1</div>
<svg style="left:104px;top:513px" width="16" height="16" viewBox="0 0 16 16"><g stroke="#5a88aa" stroke-width="1.1" fill="none"><path d="M1 1.2 Q3 0 4.5 1.5 V5.5 H2.3 Q0.8 5.5 0.8 4.2 Q0.8 3 2.5 3 H4.5"/><path d="M6 1 V4.3 Q6 5.5 7.5 5.5 Q9 5.5 9 4.3 V1 M9 1 V5.8"/><path d="M0.5 7.3 H9.5"/><path d="M1 9.2 Q3 8 4.5 9.5 V13.5 H2.3 Q0.8 13.5 0.8 12.2 Q0.8 11 2.5 11 H4.5"/><path d="M7 8.5 V13 Q7 14 9 14 M5.8 10 H9"/><path d="M14.8 3 Q13.5 3 13.5 4.5 V8 M12.5 5.5 H15"/></g><path d="M10.5 6h1M10.5 7.8h1" stroke="#5a88aa"/><circle cx="12.5" cy="12.5" r="2.6" fill="none" stroke="#3a90c8" stroke-width="1.6" stroke-dasharray="1,0.9"/><circle cx="12.5" cy="12.5" r="0.9" fill="#3a90c8"/></svg>
<div class="t" style="left:125px;top:512px;color:#000;letter-spacing:-0.1px">Compile Equations: Stationary</div>
<svg style="left:92px;top:536px" width="6" height="9" viewBox="0 0 6 9"><path d="M0.5 0.5 L4.5 4.5 L0.5 8.5 Z" fill="#fff" stroke="#a0a0a0" stroke-width="1" stroke-linejoin="round"/></svg>
<svg style="left:104px;top:531px" width="16" height="16" viewBox="0 0 16 16"><text x="0" y="11" font-size="8.5" font-weight="bold" fill="#108a9a" font-family="Liberation Sans" letter-spacing="-0.5" transform="scale(0.95,1)">u,v,w</text></svg>
<div class="t" style="left:125px;top:530px;color:#000;letter-spacing:-0.1px">Dependent Variables<span style="letter-spacing:-1px"> </span>1</div>
<svg style="left:91px;top:555px" width="6" height="6" viewBox="0 0 6 6"><path d="M5.5 0.5 L5.5 5.5 L0.5 5.5 Z" fill="#404040" stroke="#404040" stroke-width="0.8"/></svg>
<svg style="left:104px;top:549px" width="16" height="16" viewBox="0 0 16 16"><path d="M1.5 2 L1.5 14.5 L8 14.5" stroke="#30a8c0" stroke-width="1.2" fill="none"/><path d="M0 3.5 L1.5 1 L3 3.5" stroke="#30a8c0" fill="none"/><line x1="4.5" y1="1.5" x2="16" y2="1.5" stroke="#4a6a80" stroke-width="1.1"/><path d="M4 13 C6 6 10 3.5 16 3.5" stroke="#e030e0" stroke-width="1.2" fill="none"/><circle cx="12.5" cy="12.5" r="2.6" fill="#fff" stroke="#3a90c8" stroke-width="1.6" stroke-dasharray="1,0.9"/><circle cx="12.5" cy="12.5" r="0.9" fill="#3a90c8"/></svg>
<div class="t" style="left:125px;top:548px;color:#000;letter-spacing:-0.1px">Stationary Solver<span style="letter-spacing:-1px"> </span>1</div>
<svg style="left:123px;top:567px" width="16" height="16" viewBox="0 0 16 16"><rect x="1.5" y="2.5" width="12" height="11" fill="#fafafa" stroke="#a0a0a0"/><path d="M2 3 L13 13 M3 2.5 L13.5 12" stroke="#a8a8a8" stroke-width="0.8"/><path d="M5 9h1M9 5h1M10 9h1M4 5h0.8" stroke="#a0a0a0"/></svg>
<div class="t" style="left:144px;top:566px;color:#8a8a8a;letter-spacing:-0.1px">Direct</div>
<svg style="left:123px;top:585px" width="16" height="16" viewBox="0 0 16 16"><path d="M1.5 15.5 H15" stroke="#5a7888" stroke-width="1.3"/><path d="M14.5 15.5 V12.5 Q14.5 11.5 13 11.5 H5" stroke="#5a7888" stroke-width="1.1" fill="none"/><path d="M7 11.5 V10 H12 Q13 10 13 8.5 V7" stroke="#7a98a8" stroke-width="1" fill="none"/><path d="M2.5 1.5 L9.5 8" stroke="#6a8898" stroke-width="2.4"/><path d="M2.5 1.5 L9.5 8" stroke="#c8dce4" stroke-width="0.8"/><path d="M1.5 2.5 L3.5 0.5" stroke="#5a7888" stroke-width="1"/></svg>
<div class="t" style="left:144px;top:584px;color:#000;letter-spacing:-0.1px">Advanced</div>
<svg style="left:123px;top:603px" width="16" height="16" viewBox="0 0 16 16"><rect x="0.5" y="5.5" width="5" height="5" fill="#f010f0" stroke="#c000c0" stroke-width="0.6"/><rect x="5.5" y="5.5" width="5" height="5" fill="#10e8f0" stroke="#1090a8" stroke-width="0.6"/><rect x="10.5" y="5.5" width="5" height="5" fill="#f8b020" stroke="#f08000" stroke-width="0.6"/><path d="M8 0 L8 5 M6 3 L8 5 L10 3 M8 11 L8 16 M6 14 L8 16 L10 14" stroke="#3a8aa0" stroke-width="1" fill="none"/></svg>
<div class="t" style="left:144px;top:602px;color:#000;letter-spacing:-0.1px">Fully Coupled<span style="letter-spacing:-1px"> </span>1</div>
<svg style="left:111px;top:626px" width="6" height="9" viewBox="0 0 6 9"><path d="M0.5 0.5 L4.5 4.5 L0.5 8.5 Z" fill="#fff" stroke="#a0a0a0" stroke-width="1" stroke-linejoin="round"/></svg>
<svg style="left:123px;top:621px" width="16" height="16" viewBox="0 0 16 16"><rect x="1.5" y="1.5" width="13" height="13" fill="#fff" stroke="#30b0c8" stroke-width="1"/><path d="M2 2 L14 14" stroke="#1a5a9a" stroke-width="2.6"/><path d="M2 2 L14 14" stroke="#20d8f0" stroke-width="1.2"/></svg>
<div class="t" style="left:144px;top:620px;color:#000;letter-spacing:-0.1px">Iterative<span style="letter-spacing:-1px"> </span>1</div>
<svg style="left:110px;top:645px" width="6" height="6" viewBox="0 0 6 6"><path d="M5.5 0.5 L5.5 5.5 L0.5 5.5 Z" fill="#404040" stroke="#404040" stroke-width="0.8"/></svg>
<svg style="left:123px;top:639px" width="16" height="16" viewBox="0 0 16 16"><rect x="0.5" y="0.5" width="15" height="13" fill="#fff" stroke="#90a8b8"/><path d="M3 3.5h2M7 3.5h2M11 3.5h2M3 6.5h2M7 6.5h2M11 6.5h2M3 9.5h2M7 9.5h2M11 9.5h2" stroke="#8aa4b4"/></svg>
<div class="t" style="left:144px;top:638px;color:#000;letter-spacing:-0.1px">Information<span style="letter-spacing:-1px"> </span>1</div>
<div class="a" style="left:140px;top:656px;width:58px;height:18px;border:1px solid #d0d0d0;border-radius:2px;background:linear-gradient(#f8f8f8,#ececec)"></div>
<svg style="left:142px;top:657px" width="16" height="16" viewBox="0 0 16 16"><circle cx="8" cy="8" r="7" fill="#d8472a"/><circle cx="8" cy="7" r="5.5" fill="#e5603e" opacity="0.6"/><path d="M5 5 L11 11 M11 5 L5 11" stroke="#fff" stroke-width="2"/></svg>
<div class="t" style="left:163px;top:656px;color:#000;letter-spacing:-0.1px">Error<span style="letter-spacing:-1px"> </span>1</div>
<svg style="left:66px;top:675px" width="16" height="16" viewBox="0 0 16 16"><path d="M3.5 0.5 L13.5 0.5 L13.5 7.5 L3.5 7.5 Z" fill="#e8eef2" stroke="#607888"/><rect x="5" y="2" width="7" height="4" fill="#30d0c0"/><path d="M6 3.5h5" stroke="#e0fff8" stroke-width="0.8"/><path d="M1 10 L3.5 7.5 L13.5 7.5 L12 10 Z" fill="#c8d4dc" stroke="#607888" stroke-width="0.8"/><path d="M13.5 5 L15 5 L15 12 L1.5 12 L1.5 14 M8 12 L8 14 M13.5 12 L13.5 14" stroke="#a8bccb" fill="none"/><rect x="0.5" y="13.5" width="3" height="2.5" fill="#20a0f0"/><rect x="6.5" y="13.5" width="3" height="2.5" fill="#20c020"/><rect x="12" y="13.5" width="3" height="2.5" fill="#f08020"/></svg>
<div class="t" style="left:87px;top:674px;color:#000;letter-spacing:-0.1px">Job Configurations</div>
<svg style="left:35px;top:698px" width="6" height="9" viewBox="0 0 6 9"><path d="M0.5 0.5 L4.5 4.5 L0.5 8.5 Z" fill="#fff" stroke="#a0a0a0" stroke-width="1" stroke-linejoin="round"/></svg>
<svg style="left:47px;top:693px" width="16" height="16" viewBox="0 0 16 16"><defs><linearGradient id="rg" x1="0" y1="1" x2="1" y2="0"><stop offset="0" stop-color="#1060e0"/><stop offset="0.35" stop-color="#20d0f0"/><stop offset="0.65" stop-color="#f0e020"/><stop offset="1" stop-color="#f03010"/></linearGradient></defs><path d="M1 3 L4 1 L13 1 L15 3.5 L15 14 L12 15 L3 15 L1 13 Z" fill="#3aa0e0"/><path d="M1.5 3.5 L12 3.5 L12 14.5 L3 14.5 L1.5 12.5 Z" fill="url(#rg)"/><path d="M1 3 L4 1 L13 1 L12 3.5 Z" fill="#f0d040"/><path d="M12 3.5 L15 3 L15 14 L12 15 Z" fill="#e04010"/><path d="M1 3 L4 1 L13 1 L15 3.5 L15 14 L12 15 L3 15 L1 13 Z M12 3.5 L12 15" fill="none" stroke="#2a80c0" stroke-width="0.8"/></svg>
<div class="t" style="left:68px;top:692px;color:#000;letter-spacing:-0.1px">Results</div>
<div class="a" style="left:4px;top:987px;width:325px;height:2px;background:#dce9f8"></div>
<div class="a" style="left:333px;top:48px;width:451px;height:942px;border:1px solid #a0a0a0;border-radius:6px 6px 0 0;background:#f0f0f0"></div>
<svg style="left:330px;top:44px" width="460" height="32"><defs><linearGradient id="gerr" x1="0" y1="0" x2="0" y2="1"><stop offset="0" stop-color="#ffffff"/><stop offset="1" stop-color="#f0f0f0"/></linearGradient></defs><path d="M4 28 L4 10 Q4 5 9 4.5 L45 4.5 C57 4.5 65 27.5 79 27.5 L453 27.5 L453 30 L4 30 Z" fill="url(#gerr)"/><path d="M45 4.5 C57 4.5 65 27.5 79 27.5 L453 27.5" fill="none" stroke="#a0a0a0"/><path d="M169.5 27.5 L169.5 9 Q169.5 4.5 165 4.5" fill="none" stroke="#a0a0a0"/><path d="M285.5 27.5 L285.5 9 Q285.5 4.5 281 4.5" fill="none" stroke="#a0a0a0"/></svg>
<svg style="left:337px;top:52px" width="16" height="16" viewBox="0 0 16 16"><circle cx="8" cy="8" r="7" fill="#d8472a"/><circle cx="8" cy="7" r="5.5" fill="#e5603e" opacity="0.6"/><path d="M5 5 L11 11 M11 5 L5 11" stroke="#fff" stroke-width="2"/></svg>
<div class="t" style="left:357px;top:52px">Error</div>
<svg style="left:405px;top:53px" width="13" height="14" viewBox="0 0 13 14"><rect x="0.5" y="0.5" width="12" height="13" fill="#5a7080"/><rect x="1" y="1" width="2.5" height="12" fill="#20c0f0"/><rect x="4" y="1" width="2.5" height="12" fill="#30b8e0"/><rect x="7" y="1" width="2.5" height="12" fill="#10c8c0"/><rect x="10" y="1" width="2" height="12" fill="#10c8c0"/><path d="M2.2 2v5M5.2 2v7M8.2 2v3M11 2v5" stroke="#fff" stroke-width="1"/><path d="M1 12h11" stroke="#10f0f0" stroke-width="1.2"/></svg>
<div class="t" style="left:423px;top:52px">Model Library</div>
<svg style="left:505px;top:53px" width="16" height="16" viewBox="0 0 16 16"><g stroke-width="0.7"><circle cx="5" cy="2.5" r="2.2" fill="#30d0f0" stroke="#2a90c0"/><circle cx="9" cy="2.5" r="2.2" fill="#30d0f0" stroke="#2a90c0"/><circle cx="3" cy="6" r="2.2" fill="#40e040" stroke="#2a90c0"/><circle cx="7" cy="6" r="2.2" fill="#f040d0" stroke="#2a90c0"/><circle cx="11" cy="6" r="2.2" fill="#f040d0" stroke="#2a90c0"/><circle cx="3" cy="9.5" r="2.2" fill="#f0d020" stroke="#2a90c0"/><circle cx="7" cy="9.5" r="2.2" fill="#f08020" stroke="#2a90c0"/><circle cx="11" cy="9.5" r="2.2" fill="#f040d0" stroke="#2a90c0"/><circle cx="5" cy="13" r="2.2" fill="#30d0f0" stroke="#2a90c0"/><circle cx="9" cy="13" r="2.2" fill="#f040a0" stroke="#2a90c0"/></g></svg>
<div class="t" style="left:524px;top:52px;letter-spacing:-0.16px">Material Browser</div>
<div class="a" style="left:749px;top:53px;width:10px;height:5px;border:1px solid #555;background:#fff"></div>
<div class="a" style="left:767px;top:53px;width:10px;height:10px;border:1px solid #555;background:linear-gradient(#fff 0,#fff 1px,#555 1px,#555 2px,#fff 2px)"></div>
<svg style="left:341px;top:76px" width="12" height="14" viewBox="0 0 12 14"><rect x="1.5" y="5.5" width="8" height="3" fill="#c8f000" stroke="#10c010" stroke-width="1"/><rect x="1.5" y="9.5" width="8" height="3" fill="#c8f000" stroke="#10c010" stroke-width="1"/><path d="M9 0 L9 5.5" stroke="#d010d0" stroke-width="1.3"/><path d="M6.5 3.5 L11.5 3.5 L9 6.5 Z" fill="#d010d0"/></svg>
<div class="t" style="left:359px;top:76px">Compute to Selected</div>
<svg style="left:483px;top:76px" width="12" height="14" viewBox="0 0 12 14"><rect x="1.5" y="5.5" width="8" height="3" fill="#c8f000" stroke="#10c010" stroke-width="1"/><rect x="1.5" y="9.5" width="8" height="3" fill="#c8f000" stroke="#10c010" stroke-width="1"/></svg>
<div class="t" style="left:501px;top:76px">Compute</div>
<svg style="left:761px;top:77px" width="16" height="15" viewBox="0 0 16 15"><rect x="2" y="1" width="11" height="10" fill="#fff" stroke="#3a5a6a" stroke-width="1.4"/><path d="M0 13 L2 11 L13 11 L16 14 L1 14 Z" fill="#dde4e8" stroke="#3a5a6a"/><text x="5" y="9.5" font-size="9" font-weight="bold" fill="#10b0c0" font-family="Liberation Sans">?</text></svg>
<div class="a" style="left:335px;top:96px;width:447px;height:1px;background:#a0a0a0"></div>
<div class="a" style="left:334px;top:97px;width:448px;height:892px;background:#fff"></div>
<div class="a" style="left:341px;top:103px;width:436px;height:24px;border-top:1px solid #a8c0dc;border-radius:3px 3px 0 0;background:linear-gradient(#dce5f0,#fff)"></div>
<div class="a" style="left:341px;top:105px;width:1px;height:20px;background:linear-gradient(#b4c8e0,rgba(255,255,255,0))"></div>
<div class="a" style="left:776px;top:105px;width:1px;height:20px;background:linear-gradient(#b4c8e0,rgba(255,255,255,0))"></div>
<svg style="left:348px;top:112px" width="8" height="5" viewBox="0 0 8 5"><path d="M0 0 L8 0 L4 4.5 Z" fill="#1a4a8a"/></svg>
<div class="t" style="left:362px;top:105px;font-weight:bold;color:#1a4f8e">Error</div>
<div class="mono" style="left:352px;top:133px">Failed to find a solution.
Out of memory during LU factorization.
Returned solution is not converged.</div>
<div class="a" style="left:749px;top:132px;width:16px;height:500px;background:#f0f0f0;border-left:1px solid #e4e4e4"></div>
<svg style="left:753px;top:139px" width="8" height="4" viewBox="0 0 8 4"><path d="M0 4 L4 0 L8 4 Z" fill="#707070"/></svg>
<svg style="left:753px;top:621px" width="8" height="4" viewBox="0 0 8 4"><path d="M0 0 L8 0 L4 4 Z" fill="#707070"/></svg>
<div class="a" style="left:352px;top:632px;width:396px;height:17px;background:#ececec;border-top:1px solid #e2e2e2"></div>
<div class="a" style="left:748px;top:632px;width:17px;height:17px;background:#f0f0f0"></div>
<svg style="left:358px;top:636px" width="4" height="8" viewBox="0 0 4 8"><path d="M4 0 L0 4 L4 8 Z" fill="#707070"/></svg>
<svg style="left:738px;top:636px" width="4" height="8" viewBox="0 0 4 8"><path d="M0 0 L4 4 L0 8 Z" fill="#707070"/></svg>
<div class="a" style="left:787px;top:48px;width:470px;height:751px;border:1px solid #a0a0a0;border-radius:6px 6px 0 0;background:#f0f0f0"></div>
<svg style="left:784px;top:44px" width="460" height="32"><defs><linearGradient id="ggr" x1="0" y1="0" x2="0" y2="1"><stop offset="0" stop-color="#ffffff"/><stop offset="1" stop-color="#f0f0f0"/></linearGradient></defs><path d="M4 28 L4 10 Q4 5 9 4.5 L66 4.5 C78 4.5 86 27.5 100 27.5 L460 27.5 L460 30 L4 30 Z" fill="url(#ggr)"/><path d="M66 4.5 C78 4.5 86 27.5 100 27.5 L460 27.5" fill="none" stroke="#a0a0a0"/></svg>
<svg style="left:790px;top:52px" width="16" height="16" viewBox="0 0 16 16"><path d="M8 14 L11 1 L15 13 Z" fill="#b070c0"/><path d="M11 1 L15 13 L12 14 Z" fill="#d0a0e0"/><circle cx="5" cy="11" r="4" fill="#20b0d0"/><circle cx="4" cy="10" r="1.5" fill="#a0e8f0"/></svg>
<div class="t" style="left:811px;top:52px;letter-spacing:-0.38px">Graphics</div>
<div class="a" style="left:790px;top:96px;width:450px;height:1px;background:#a0a0a0"></div>
<div class="a" style="left:790px;top:97px;width:450px;height:699px;background:linear-gradient(#7ec6ea 0%,#9ed6f0 43%,#cde9f5 100%)"></div>
<div class="a" style="left:787px;top:802px;width:470px;height:188px;border:1px solid #a0a0a0;border-radius:6px 6px 0 0;background:#f0f0f0"></div>
<svg style="left:784px;top:798px" width="460" height="32"><defs><linearGradient id="gms" x1="0" y1="0" x2="0" y2="1"><stop offset="0" stop-color="#ffffff"/><stop offset="1" stop-color="#f0f0f0"/></linearGradient></defs><path d="M4 28 L4 10 Q4 5 9 4.5 L93 4.5 C105 4.5 113 27.5 127 27.5 L460 27.5 L460 30 L4 30 Z" fill="url(#gms)"/><path d="M93 4.5 C105 4.5 113 27.5 127 27.5 L460 27.5" fill="none" stroke="#a0a0a0"/><path d="M189.5 27.5 L189.5 9 Q189.5 4.5 185 4.5" fill="none" stroke="#a0a0a0"/><path d="M237.5 27.5 L237.5 9 Q237.5 4.5 233 4.5" fill="none" stroke="#a0a0a0"/><path d="M302.5 27.5 L302.5 9 Q302.5 4.5 298 4.5" fill="none" stroke="#a0a0a0"/></svg>
<svg style="left:791px;top:808px" width="15" height="10" viewBox="0 0 15 10"><rect x="0.5" y="0.5" width="14" height="9" fill="#e8f0f8" stroke="#7da0bc"/><path d="M0.5 0.5 L7.5 6 L14.5 0.5" fill="none" stroke="#7da0bc"/></svg>
<div class="t" style="left:811px;top:806px;letter-spacing:-0.55px">Messages</div>
<svg style="left:869px;top:809px" width="11" height="11" viewBox="0 0 11 11"><path d="M1 2.5 L2.5 1 L5.5 4 L8.5 1 L10 2.5 L7 5.5 L10 8.5 L8.5 10 L5.5 7 L2.5 10 L1 8.5 L4 5.5 Z" fill="#fff" stroke="#606060" stroke-width="0.9" stroke-linejoin="round"/></svg>
<svg style="left:905px;top:811px" width="16" height="7" viewBox="0 0 16 7"><rect x="0.5" y="0.5" width="15" height="6" fill="#e0e8e8" stroke="#a0b0b0"/><rect x="1" y="1" width="8" height="5" fill="#80d020"/></svg>
<div class="t" style="left:925px;top:806px;letter-spacing:-0.55px">Progress</div>
<svg style="left:978px;top:807px" width="15" height="14" viewBox="0 0 15 14"><rect x="0.5" y="0.5" width="14" height="13" fill="#fff" stroke="#90a8b8"/><path d="M3 3.5h1M6 3.5h1M9 3.5h1M12 3.5h1M3 6.5h1M6 6.5h1M9 6.5h1M12 6.5h1M3 9.5h1M6 9.5h1M9 9.5h1M12 9.5h1" stroke="#8aa0b0"/></svg>
<div class="t" style="left:998px;top:806px;letter-spacing:-0.6px">Log</div>
<svg style="left:1028px;top:806px" width="12" height="16" viewBox="0 0 12 16"><rect x="0.5" y="0.5" width="11" height="15" fill="#fff" stroke="#7da0bc"/><path d="M4 3.5h6M4 6h6M4 8.5h6M4 11h6M4 13.5h4" stroke="#9ab4c8" stroke-width="0.8"/><path d="M2.2 2v12" stroke="#2090d0" stroke-dasharray="1,1.2"/></svg>
<div class="t" style="left:1046px;top:806px;letter-spacing:-0.55px">Results</div>
<svg style="left:794px;top:830px" width="12" height="16" viewBox="0 0 12 16"><rect x="5" y="0" width="2" height="7" fill="#8a7050"/><path d="M3 7 L9 7 L11 14 C8 15 3 16 0 16 Z" fill="#f0c060" stroke="#c09040" stroke-width="0.6"/><path d="M5 9 L3 15 M7 9 L6 15 M9 9 L9 15" stroke="#d0a050" stroke-width="0.6"/></svg>
<div class="a" style="left:790px;top:850px;width:450px;height:1px;background:#a0a0a0"></div>
<div class="a" style="left:790px;top:851px;width:450px;height:137px;background:#fff"></div>
<div class="t" style="left:790px;top:851px;letter-spacing:-0.5px">COMSOL 4.3.1.115</div>
<div class="a" style="left:790px;top:971px;width:450px;height:17px;background:#ececec;border-top:1px solid #e2e2e2"></div>
<svg style="left:796px;top:975px" width="4" height="8" viewBox="0 0 4 8"><path d="M4 0 L0 4 L4 8 Z" fill="#707070"/></svg>

<svg style="left:793px;top:79px" width="16" height="12" viewBox="0 0 16 12"><path d="M1 6 Q8 0 15 6 Q8 12 1 6 Z" fill="#dce6ea" stroke="#a8b8c0"/><circle cx="8" cy="6" r="2" fill="#a8b8c0"/><path d="M3 1 L13 11" stroke="#3a5060" stroke-width="1.3"/></svg><svg style="left:816px;top:79px" width="16" height="12" viewBox="0 0 16 12"><path d="M1 6 Q8 -1 15 6 Q8 13 1 6 Z" fill="#e8eef0" stroke="#4a6070" stroke-width="1.3"/><circle cx="8" cy="6" r="2.6" fill="#4a6070"/><circle cx="7.3" cy="5.3" r="0.8" fill="#c0d0d8"/></svg><svg style="left:839px;top:78px" width="16" height="14" viewBox="0 0 16 14"><path d="M12 4 A5.5 5.5 0 1 0 13.5 9.5" fill="none" stroke="#5a7a8a" stroke-width="1.8"/><path d="M10 1.5 L15 1 L14.5 6.5 Z" fill="#5a7a8a"/></svg><svg style="left:862px;top:77px" width="16" height="16" viewBox="0 0 16 16"><rect x="1" y="1" width="14" height="14" rx="3" fill="none" stroke="#3a5060" stroke-width="1.3" stroke-dasharray="2,1.5"/><path d="M3 8 Q8 3 13 8 Q8 13 3 8 Z" fill="none" stroke="#3a5060"/><circle cx="8" cy="8" r="1.6" fill="#3a5060"/></svg><svg style="left:885px;top:83px" width="8" height="4" viewBox="0 0 8 4"><path d="M0 0 L8 0 L4 4 Z" fill="#111"/></svg><div class="a" style="left:899px;top:76px;width:1px;height:17px;background:#808080"></div><div class="a" style="left:900px;top:76px;width:1px;height:17px;background:#fff"></div><svg style="left:907px;top:77px" width="16" height="16" viewBox="0 0 16 16"><circle cx="6.5" cy="6.5" r="5" fill="#e8f0f4" stroke="#3a5a6a" stroke-width="1.6"/><path d="M10 10 L14.5 14.5" stroke="#3a5a6a" stroke-width="2.4"/><path d="M6.5 4 L6.5 9 M4 6.5 L9 6.5" stroke="#3a5a6a" stroke-width="1.2"/></svg><svg style="left:931px;top:77px" width="16" height="16" viewBox="0 0 16 16"><circle cx="6.5" cy="6.5" r="5" fill="#e8f0f4" stroke="#3a5a6a" stroke-width="1.6"/><path d="M10 10 L14.5 14.5" stroke="#3a5a6a" stroke-width="2.4"/><path d="M4 6.5 L9 6.5" stroke="#3a5a6a" stroke-width="1.2"/></svg><svg style="left:953px;top:77px" width="16" height="16" viewBox="0 0 16 16"><rect x="0.5" y="6.5" width="9" height="8" fill="none" stroke="#3a5a6a" stroke-dasharray="1.5,1"/><circle cx="9" cy="6" r="4.5" fill="none" stroke="#8a9aa8" stroke-width="1.3"/><path d="M12 9 L15.5 13" stroke="#8a9aa8" stroke-width="1.8"/><path d="M9 3.5 L9 8.5 M6.5 6 L11.5 6" stroke="#3a5a6a"/></svg><svg style="left:977px;top:77px" width="16" height="16" viewBox="0 0 16 16"><rect x="3.5" y="3.5" width="9" height="9" fill="none" stroke="#3a6a8a" stroke-dasharray="1,1"/><rect x="5.5" y="5.5" width="5" height="5" fill="#c8e8f4" stroke="#1a8ac0"/><path d="M8 0 L6 2.5 L10 2.5 Z M8 16 L6 13.5 L10 13.5 Z M0 8 L2.5 6 L2.5 10 Z M16 8 L13.5 6 L13.5 10 Z" fill="#10a0d0"/></svg><svg style="left:1000px;top:77px" width="16" height="16" viewBox="0 0 16 16"><rect x="0.5" y="0.5" width="15" height="15" fill="#e8f0f4" stroke="#5a7a8a"/><path d="M8 2 L8 14 M2 8 L14 8" stroke="#1a6a9a" stroke-width="1.2"/><path d="M8 1.5 L5.5 4.5 L10.5 4.5 Z M8 14.5 L5.5 11.5 L10.5 11.5 Z M1.5 8 L4.5 5.5 L4.5 10.5 Z M14.5 8 L11.5 5.5 L11.5 10.5 Z" fill="#10a0d0"/></svg><div class="a" style="left:1022px;top:76px;width:1px;height:17px;background:#808080"></div><div class="a" style="left:1023px;top:76px;width:1px;height:17px;background:#fff"></div><svg style="left:1031px;top:78px" width="17" height="13" viewBox="0 0 17 13"><path d="M7 11 L7 1.5 M5 4 L7 1 L9 4" stroke="#1a5ad0" stroke-width="1.4" fill="none"/><path d="M7 11 L1 6.5 M1 9 L1 6 L3.5 6" stroke="#20c020" stroke-width="1.4" fill="none"/><path d="M7 11 L16 6.5 M13 6 L16 6.5 L15 9" stroke="#f04020" stroke-width="1.4" fill="none"/></svg><svg style="left:1055px;top:83px" width="8" height="4" viewBox="0 0 8 4"><path d="M0 0 L8 0 L4 4 Z" fill="#111"/></svg><svg style="left:1069px;top:77px" width="16" height="16" viewBox="0 0 16 16"><path d="M2 14 L2 2 M0.5 4 L2 1.5 L3.5 4" stroke="#20c020" stroke-width="1.4" fill="none"/><path d="M2 14.3 L14 14.3 M12 12.8 L14.5 14.3 L12 15.8" stroke="#f04020" stroke-width="1.4" fill="none"/><text x="4" y="10" font-size="8.5" fill="#8a9aa8" font-family="Liberation Sans">xy</text></svg><svg style="left:1092px;top:77px" width="16" height="16" viewBox="0 0 16 16"><path d="M2 14 L2 2 M0.5 4 L2 1.5 L3.5 4" stroke="#1a5ad0" stroke-width="1.4" fill="none"/><path d="M2 14.3 L14 14.3 M12 12.8 L14.5 14.3 L12 15.8" stroke="#20c020" stroke-width="1.4" fill="none"/><text x="4" y="10" font-size="8.5" fill="#8a9aa8" font-family="Liberation Sans">yz</text></svg><svg style="left:1115px;top:77px" width="16" height="16" viewBox="0 0 16 16"><path d="M2 14 L2 2 M0.5 4 L2 1.5 L3.5 4" stroke="#f04020" stroke-width="1.4" fill="none"/><path d="M2 14.3 L14 14.3 M12 12.8 L14.5 14.3 L12 15.8" stroke="#1a5ad0" stroke-width="1.4" fill="none"/><text x="4" y="10" font-size="8.5" fill="#8a9aa8" font-family="Liberation Sans">zx</text></svg><div class="a" style="left:1137px;top:76px;width:1px;height:17px;background:#808080"></div><div class="a" style="left:1138px;top:76px;width:1px;height:17px;background:#fff"></div><svg style="left:1146px;top:78px" width="16" height="14" viewBox="0 0 16 14"><path d="M3 11 Q-1 7 2 4 Q6 1 13 2 Q16 3 15 6" fill="none" stroke="#5a7a8a" stroke-width="1.4"/><rect x="5.5" y="5.5" width="10" height="7" fill="none" stroke="#3a5060" stroke-dasharray="1.2,1"/><ellipse cx="10.5" cy="9" rx="3" ry="2" fill="#30b0e0"/></svg><svg style="left:1168px;top:78px" width="16" height="14" viewBox="0 0 16 14"><path d="M5 10 Q0 9 1 5 Q3 1 10 2 Q15 3 15 6" fill="none" stroke="#7a8a98" stroke-width="1.2"/><path d="M6 5 Q16 4 15 9 Q13 13 6 12 Q2 11 4 8" fill="none" stroke="#7a8a98" stroke-width="1.2"/></svg><div class="a" style="left:1189px;top:75px;width:23px;height:20px;border:1px solid #555;border-radius:3px;background:linear-gradient(#d8d8d8,#e8e8e8)"></div><svg style="left:1193px;top:79px" width="15" height="13" viewBox="0 0 15 13"><rect x="0.5" y="1.5" width="14" height="10" rx="5" fill="#f4f6f8" stroke="#4a6070" stroke-width="1.3"/><path d="M3 4 Q7 3 12 4" stroke="#c0d0d8" fill="none"/></svg><svg style="left:1215px;top:78px" width="16" height="14" viewBox="0 0 16 14"><rect x="0.5" y="2" width="10" height="10" rx="5" fill="#e4ecf0" stroke="#5a7a8a"/><rect x="5.5" y="2" width="10" height="10" rx="5" fill="#e4ecf0" stroke="#5a7a8a"/><rect x="6" y="5" width="5" height="5" fill="#20c0f0"/></svg><svg style="left:1236px;top:78px" width="16" height="14" viewBox="0 0 16 14"><rect x="0.5" y="2" width="10" height="10" rx="5" fill="#e4ecf0" stroke="#5a7a8a"/></svg>
<svg style="left:790px;top:97px" width="450" height="699" viewBox="790 97 450 699">
<defs>
<linearGradient id="cyl" x1="0" y1="0" x2="1" y2="0"><stop offset="0" stop-color="#c6d0d3"/><stop offset="1" stop-color="#abb8bc"/></linearGradient>
<linearGradient id="ell" x1="0" y1="0" x2="1" y2="1"><stop offset="0" stop-color="#8a98a0"/><stop offset="1" stop-color="#9ba8ae"/></linearGradient>
<filter id="soft" x="-20%" y="-20%" width="140%" height="140%"><feGaussianBlur stdDeviation="0.5"/></filter><clipPath id="ec"><path d="M1240 197 C1200 208 1166 245 1165 280 C1163 310 1182 330 1220 335 C1228 337 1234 338 1240 338 Z"/></clipPath>
</defs>
<path d="M1165 282 L1166 292 L1240 482 L1240 330 Z" fill="url(#cyl)"/>
<g fill="none" filter="url(#soft)">
<path id="c1" d="M1240 258 C1218 270 1206 292 1209 314 C1212 336 1226 352 1240 362" stroke="#b4b4c0" stroke-width="12"/>
<path d="M1240 258 C1218 270 1206 292 1209 314 C1212 336 1226 352 1240 362" stroke="#cacad4" stroke-width="7"/>
<path d="M1240 258 C1218 270 1206 292 1209 314 C1212 336 1226 352 1240 362" stroke="#e4e4ec" stroke-width="2.5"/>
<path d="M1214 346 C1220 366 1230 382 1240 390" stroke="#b8b8c4" stroke-width="11"/>
<path d="M1214 346 C1220 366 1230 382 1240 390" stroke="#e0e0e8" stroke-width="3"/>
<path d="M1224 376 C1228 392 1234 402 1240 408" stroke="#bcbcc8" stroke-width="9"/>
<path d="M1224 376 C1228 392 1234 402 1240 408" stroke="#e0e0e8" stroke-width="2.5"/>
</g>
<path d="M1240 197 C1200 208 1166 245 1165 280 C1163 310 1182 330 1220 335 C1228 337 1234 338 1240 338 Z" fill="url(#ell)"/>
<g clip-path="url(#ec)"><g fill="none" filter="url(#soft)">
<path d="M1240 258 C1218 270 1206 292 1209 314 C1212 336 1226 352 1240 362" stroke="#8a8a96" stroke-width="12"/>
<path d="M1240 258 C1218 270 1206 292 1209 314 C1212 336 1226 352 1240 362" stroke="#acacb6" stroke-width="7"/>
<path d="M1240 258 C1218 270 1206 292 1209 314 C1212 336 1226 352 1240 362" stroke="#d4d4dc" stroke-width="2.5"/>
<path d="M1240 263 C1222 273 1212 292 1214 312" stroke="#6a6aa0" stroke-width="0.7" transform="translate(-4,0)"/>
<path d="M1240 300 C1228 308 1221 320 1223 332 C1225 348 1232 360 1240 368" stroke="#8a8a96" stroke-width="10"/>
<path d="M1240 300 C1228 308 1221 320 1223 332 C1225 348 1232 360 1240 368" stroke="#acacb6" stroke-width="5"/>
<path d="M1240 300 C1228 308 1221 320 1223 332" stroke="#d0d0d8" stroke-width="2"/>
</g></g>
<path d="M1240 197 C1200 208 1166 245 1165 280 C1163 310 1182 330 1220 335 C1228 337 1234 338 1240 338" fill="none" stroke="#3a4850" stroke-width="0.9"/>
<g stroke="#8c8680" stroke-width="0.9" fill="none">
<path d="M1229 182 L1240 210"/>
<path d="M1159 222 L1240 426"/>
<path d="M1154 263 L1240 482" stroke="#7c8080"/>
<path d="M1148 305 L1240 541"/>
<path d="M1141.5 348 L1240 596"/>
<path d="M1194.5 292 L1175.3 448"/>
<path d="M1229 386 L1212 541"/>
<path d="M1209.7 280 L1219 278"/>
</g>
<text x="1163" y="464" font-family="Liberation Sans" font-size="12" fill="#000">-0.1</text>
<g>
<path d="M832 754 L808 758" stroke="#00f000" stroke-width="1.6"/><path d="M803 758.5 L811 754.5 L811 762 Z" fill="#00f000"/>
<path d="M832 754 L831.5 766" stroke="#f00000" stroke-width="1.6"/><path d="M828 765 L835 765 L831 773 Z" fill="#f00000"/>
<path d="M832.5 754 L838 767" stroke="#0000f0" stroke-width="1.6"/><path d="M834.5 768 L841 766 L840 775 Z" fill="#0000f0"/>
<text x="792.5" y="762" font-family="Liberation Sans" font-size="12" fill="#000">y</text>
<text x="827" y="782" font-family="Liberation Sans" font-size="12" fill="#000">x</text>
<text x="838.5" y="784" font-family="Liberation Sans" font-size="12" fill="#000">z</text>
</g>
</svg>
</body></html>
